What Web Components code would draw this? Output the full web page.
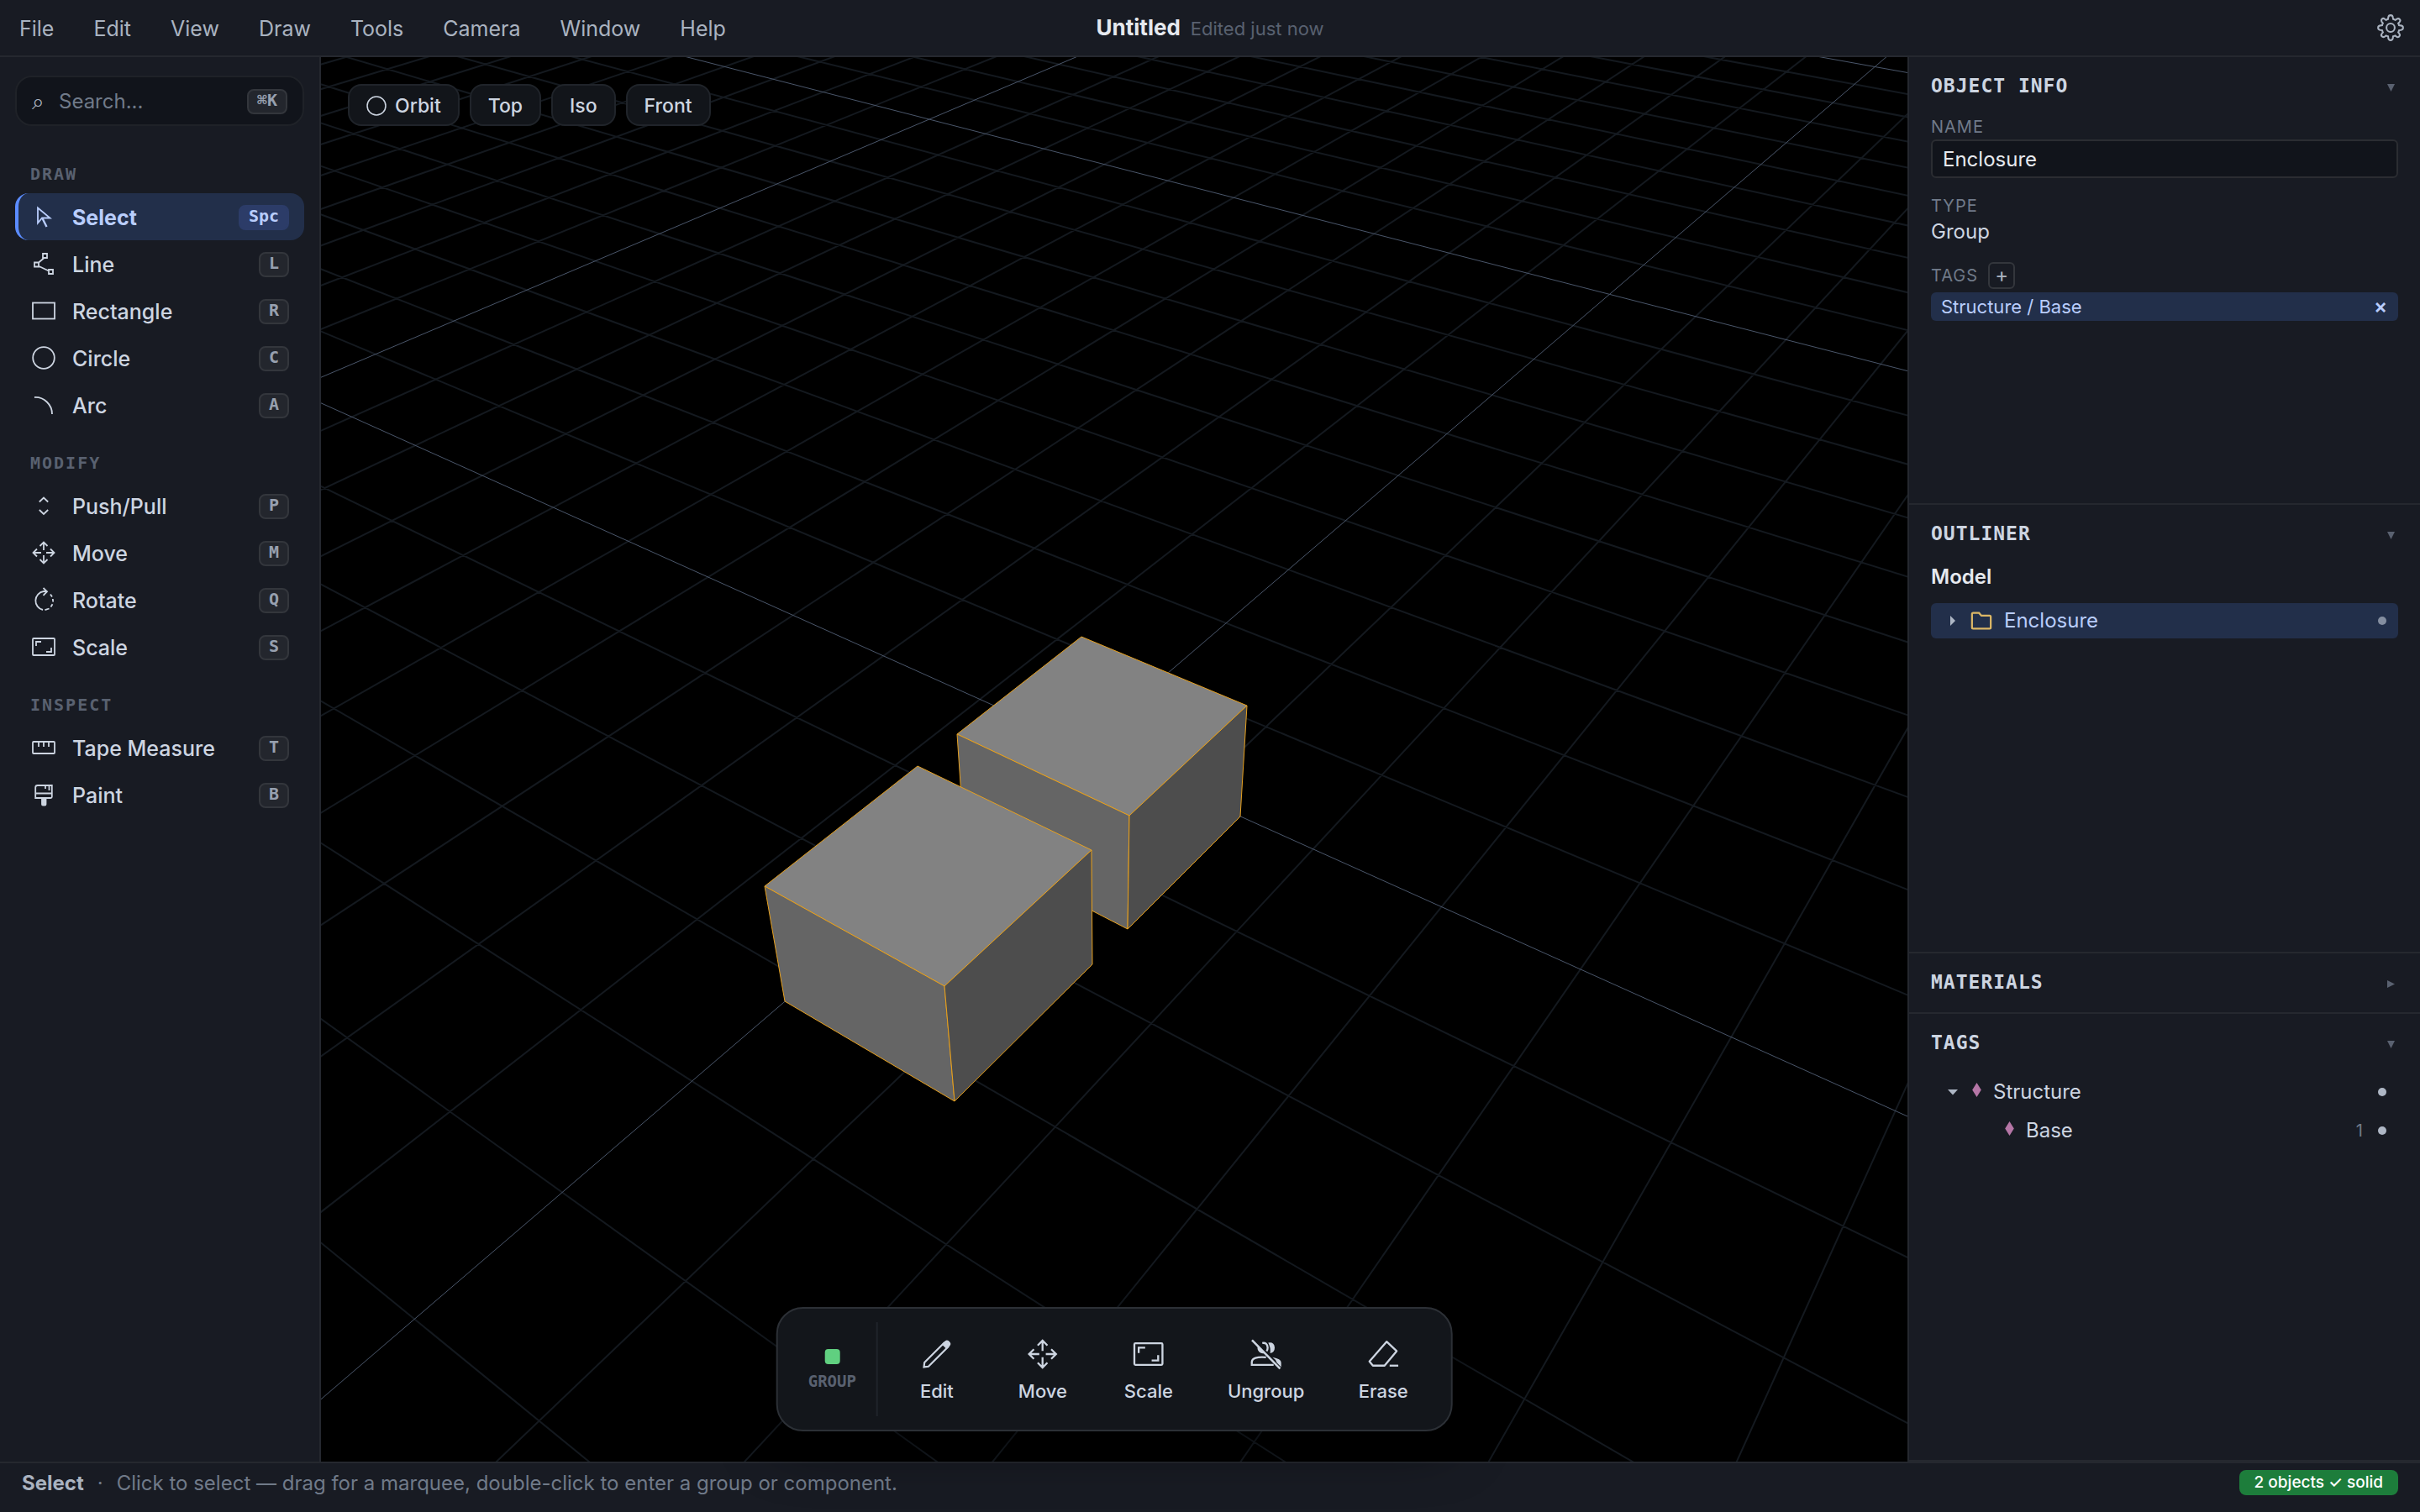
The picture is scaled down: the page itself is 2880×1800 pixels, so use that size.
<!DOCTYPE html>
<html lang="en">
<head>
<meta charset="utf-8">
<title>Untitled</title>
<style>
  :root {
    --panel: #181b23; --line: #25282f; --well: #11141b; --text: #cdd5e1; --strong: #e6e9ee;
    --muted: #aab3c0; --dim: #707a89; --faint: #596170; --accent: #5b8cff; --sel: #222f4a; --sel-text: #b9cdfc;
    --mono: "DejaVu Sans Mono", "Liberation Mono", monospace;
  }
  body { margin: 0; height: 100vh; background: var(--panel); color: var(--text); font: 24px/30px Inter, "Liberation Sans", sans-serif; overflow: hidden; }
</style>
</head>
<body>
<cad-app></cad-app>
<script>
const BASE = `*{box-sizing:border-box}button{font:inherit;color:inherit;background:none;border:0;padding:0;margin:0;cursor:pointer}`;
function define(name, render, after) {
  customElements.define(name, class extends HTMLElement {
    connectedCallback() {
      if (this.shadowRoot) return;
      const root = this.attachShadow({ mode: 'open' });
      const t = document.createElement('template');
      t.innerHTML = render(this);
      root.append(t.content.cloneNode(true));
      if (after) after(root, this);
    }
  });
}

const ICONS = {
  select: '<path d="M7 3.5V21.5L12 15.5H21.5Z"/><path d="M12.500 16L17.500 26" stroke-width="2.400"/>',
  line: '<path d="M13 2h5v5h-5zM3 12.500h5v5H3zM20 21h5v5h-5zM14 7.500L8 12.500M8.500 17L20 22.500"/>',
  rect: '<rect x="1" y="4.500" width="26" height="19"/>',
  circle: '<circle cx="14" cy="14" r="12.800"/>',
  arc: '<path d="M3 5A20 20 0 0 1 24 25"/>',
  push: '<path d="M8.800 9.500L14 4.500L19.200 9.500M8.800 19L14 24L19.200 19"/>',
  move: '<path d="M14 11V2M9.500 6L14 1.500L18.500 6M14 17V26M9.500 22L14 26.500L18.500 22M11 14H2M6 9.500L1.500 14L6 18.500M17 14H26M22 9.500L26.500 14L22 18.500"/>',
  rotate: '<path d="M13 26A11.200 11.200 0 0 1 14 4H18M13.500 0L18 4.200L13.500 8.800"/><path d="M15.500 26.200L20.500 24.500M22.500 22.500L24.500 19.300M25.200 16.500L24.800 13M24 10.500L22 7.500"/>',
  scale: '<rect x="1" y="4" width="26" height="20" rx="1"/><path d="M5 13V8H11M23 15V20H17"/>',
  tape: '<rect x="1" y="7" width="26" height="14" rx="1"/><path d="M8 7.500V13M14 7.500V13M20 7.500V13"/>',
  paint: '<path d="M4.200 18V5.500A2.500 2.500 0 0 1 6.700 3H23.800V16.500A1.500 1.500 0 0 1 22.300 18ZM4 12.500H24M16 3V7M20.500 3V9"/><path d="M12 18.500H16.500V25.500A1 1 0 0 1 15.500 26.500H13A1 1 0 0 1 12 25.500Z" fill="currentColor"/>',
  edit: '<path d="M2.200 26L2.700 21.800L20.800 3.700L24.500 7.400L6.400 25.500Z" stroke-width="1.700"/><path d="M19.500 5L22.300 2.200Q23.500 1 24.800 2.200L26 3.400Q27 4.600 26 5.800L23.200 8.600Z" fill="currentColor" stroke-width="1"/>',
  ungroup: '<path d="M1 1L27 27.500" stroke-width="2"/><path d="M6.500 6.500A5 5 0 0 0 13 13Z" fill="currentColor" stroke="none"/><path d="M10.500 3.800Q15 3 15.500 8Q15.500 10 14.500 11.200"/><path d="M16 3.500Q21.500 2.500 22 8Q22 12.500 17.800 13.300Q18.500 8 16 3.500Z" fill="currentColor" stroke="none"/><path d="M14 17Q1 16 .8 21.500V24H21"/><path d="M20 17Q28 18.500 28 22V26L24 22Q23 19 20 17Z" fill="currentColor" stroke="none"/>',
  erase: '<path d="M16.700 2.500L26 11.200L14.800 24.700H4L.8 20.800Z" stroke-linejoin="round"/><path d="M19.500 24.700H27.500"/>',
  folder: '<path d="M2 23V5.500Q2 4 3.500 4H11L14 7.500H24.500Q26 7.500 26 9V22.500Q26 24 24.500 24H3.500Q2 24 2 22.500Z" stroke-width="2.400"/>',
  gear: '<path d="M11.600 3.200Q11.900 1 14 1T16.400 3.200L16.700 5Q18 5.400 19 6L20.500 4.900Q22.200 3.900 23.500 5.200T23.100 8.300L22 9.400Q22.500 10.400 22.800 11.500L24.800 11.700Q27 12 27 14T24.800 16.400L22.800 16.700Q22.500 18 22 18.800L23.100 20.300Q24.300 21.900 22.900 23.200T20 23.200L18.800 22.200Q17.800 22.700 16.600 23L16.400 24.800Q16 27 14 27T11.600 24.800L11.400 23Q10.200 22.700 9.200 22.200L7.900 23.200Q6.200 24.300 4.900 23T4.900 20.200L6 18.800Q5.500 17.800 5.200 16.700L3.200 16.400Q1 16 1 14T3.200 11.700L5.200 11.500Q5.500 10.300 6 9.300L4.900 7.900Q3.800 6.200 5.100 4.900T8 5L9.200 6Q10.200 5.400 11.300 5.100Z"/><circle cx="14" cy="14" r="4.300"/>'
};
define('cad-icon', el => `<style>:host{display:block;flex:none;width:var(--icon,28px);height:var(--icon,28px)}svg{display:block;width:100%;height:100%;overflow:visible}</style>
<svg viewBox="0 0 28 28" fill="none" stroke="currentColor" stroke-width="1.800" aria-hidden="true">${ICONS[el.getAttribute('name')]}</svg>`);

define('key-cap', () => `<style>${BASE}:host{display:block;flex:none}
kbd{display:block;height:30px;padding:0 10px;border:2px solid var(--cap-line,#33363c);border-radius:8px;background:var(--cap-bg,#23262d);color:var(--cap-text,#97a0af);font:bold 20px/22px var(--mono)}</style><kbd><slot></slot></kbd>`);

define('menu-bar', () => `<style>${BASE}
:host{display:block;border-bottom:2px solid var(--line);height:68px}
header{display:grid;grid-template-columns:1fr auto 1fr;align-items:center;height:66px}
nav{display:flex;gap:1px}nav button{padding:1px 23px 0;color:var(--muted);font-size:25px}
h1{margin:0;padding-top:1px;display:flex;align-items:baseline;gap:12px;font-size:26px;font-weight:700;color:var(--strong)}
small{font-size:22px;font-weight:400;color:var(--faint)}
.end{justify-self:end;margin-right:19px;color:var(--muted);--icon:32px}</style>
<header><nav>${['File','Edit','View','Draw','Tools','Camera','Window','Help'].map(t=>`<button>${t}</button>`).join('')}</nav>
<h1>Untitled <small>Edited just now</small></h1><button class="end" aria-label="Settings"><cad-icon name="gear"></cad-icon></button></header>`);

define('tool-item', el => `<style>${BASE}:host{display:block}
button{width:100%;height:56px;display:flex;align-items:center;gap:20px;padding:2px 18px 0 16px;border-left:4px solid transparent;border-radius:16px;font-size:25px;font-weight:500;text-align:left}
cad-icon{margin-bottom:2px}
span{flex:1}
:host([active]) button{background:var(--sel);border-color:var(--accent);color:var(--sel-text);font-weight:700;--cap-bg:#2c3c68;--cap-line:#2c3c68;--cap-text:#b9cdfc}</style>
<button><cad-icon name="${el.getAttribute('icon')}"></cad-icon><span><slot></slot></span><key-cap>${el.getAttribute('key')}</key-cap></button>`);

define('tool-group', el => `<style>${BASE}:host{display:block}h2{margin:0;padding:29px 18px 11px;font:bold 20px/24px var(--mono);letter-spacing:2px;color:var(--faint)}</style><h2>${el.getAttribute('label')}</h2><slot></slot>`);

define('tool-sidebar', () => `<style>${BASE}
:host{display:block;width:382px;padding:22px 18px;border-right:2px solid var(--line);background:var(--panel)}
.search{display:flex;align-items:center;height:60px;padding:2px 18px 0;gap:16px;border:2px solid #1f2228;border-radius:20px;background:var(--well);margin-bottom:16px;color:var(--dim)}
.search i{width:16px;font:normal 26px/30px "DejaVu Sans",sans-serif;color:var(--muted)}
input{flex:1;min-width:0;border:0;padding:0;background:none;outline:0;font:24px/30px Inter,sans-serif;color:var(--text)}
input::placeholder{color:var(--dim);opacity:1}</style>
<label class="search"><i aria-hidden="true">⌕</i><input placeholder="Search..." aria-label="Search tools"><key-cap>⌘K</key-cap></label>
<tool-group label="DRAW"><tool-item active icon="select" key="Spc">Select</tool-item><tool-item icon="line" key="L">Line</tool-item><tool-item icon="rect" key="R">Rectangle</tool-item><tool-item icon="circle" key="C">Circle</tool-item><tool-item icon="arc" key="A">Arc</tool-item></tool-group>
<tool-group label="MODIFY"><tool-item icon="push" key="P">Push/Pull</tool-item><tool-item icon="move" key="M">Move</tool-item><tool-item icon="rotate" key="Q">Rotate</tool-item><tool-item icon="scale" key="S">Scale</tool-item></tool-group>
<tool-group label="INSPECT"><tool-item icon="tape" key="T">Tape Measure</tool-item><tool-item icon="paint" key="B">Paint</tool-item></tool-group>`);

define('action-button', el => `<style>${BASE}:host{display:block}
button{min-width:112px;height:112px;padding:4px 24px 0;display:flex;flex-direction:column;align-items:center;justify-content:center;gap:12px;font-size:22px;font-weight:500;line-height:28px;--icon:36px}</style>
<button><cad-icon name="${el.getAttribute('icon')}"></cad-icon><slot></slot></button>`);

define('action-bar', () => `<style>${BASE}
:host{display:flex;gap:14px;padding:16px 24px;border:2px solid #2c3036;border-radius:32px;background:#13161b;box-shadow:0 16px 64px rgba(0,0,0,.5)}
.kind{display:flex;flex-direction:column;align-items:center;justify-content:center;gap:8px;padding:2px 24px 0 12px;border-right:2px solid #20242a;font:bold 19px/24px var(--mono);color:var(--faint)}
.kind i{width:18px;height:18px;border-radius:4px;background:#60d080}</style>
<div class="kind"><i></i>GROUP</div>
<action-button icon="edit">Edit</action-button><action-button icon="move">Move</action-button><action-button icon="scale">Scale</action-button><action-button icon="ungroup">Ungroup</action-button><action-button icon="erase">Erase</action-button>`);

define('view-port', () => `<style>${BASE}
:host{display:block;position:relative;z-index:1;background:#000;min-width:0}
svg.scene{position:absolute;inset:0;width:100%;height:100%}
.views{position:absolute;left:32px;top:32px;display:flex;gap:12px}
.views button{display:flex;align-items:center;gap:10px;height:50px;padding:1px 20px 0;border:2px solid #20242a;border-radius:16px;background:#12151a;font-size:23px;font-weight:500;--icon:24px}
action-bar{position:absolute;bottom:36px;left:50%;transform:translateX(-50%)}</style>
<svg class="scene" viewBox="382 68 1888 1672" preserveAspectRatio="xMidYMid slice" role="img" aria-label="Model view">
<g class="minor" stroke="#14191f" stroke-width="2"></g><g class="major" stroke="#4a566a" stroke-width="1"></g>
<g stroke="#e8a11e" stroke-width="1" stroke-linejoin="round">
<path fill="#828282" d="M1287 758L1484 840L1344 971L1139 874Z"/><path fill="#656565" d="M1139 874L1344 971L1342 1106L1148 1006Z"/><path fill="#4d4d4d" d="M1344 971L1484 840L1476 972L1342 1106Z"/>
<path fill="#828282" d="M1092 912L1299 1012L1124 1174L910 1055Z"/><path fill="#656565" d="M910 1055L1124 1174L1136 1311L934 1192Z"/><path fill="#4d4d4d" d="M1124 1174L1299 1012L1300 1148L1136 1311Z"/></g></svg>
<div class="views"><button><cad-icon name="circle"></cad-icon>Orbit</button><button>Top</button><button>Iso</button><button>Front</button></div>
<action-bar></action-bar>`, root => {
  // Ground plane: perspective projection of the unit grid, every tenth line is a major one.
  const G = -0.03505, C = 0.0492, NEAR = 0.03, FAR = 70;
  const project = (x, y) => { const w = 1 + G * x + C * y; return [(1289 + 82.04 * x + 156.89 * y) / w, (887.8 + 26.1 * x - 36.5 * y) / w]; };
  const groups = { minor: [], major: [] };
  const add = (i, a, b) => groups[i % 10 ? 'minor' : 'major'].push(`M${project(...a).map(n => n.toFixed(1))}L${project(...b).map(n => n.toFixed(1))}`);
  for (let i = -40; i <= FAR; i++) {
    const xMax = (1 + C * i - NEAR) / -G;
    if (xMax > -FAR) add(i, [-FAR, i], [Math.min(xMax, FAR), i]);
  }
  for (let i = -FAR; i <= 40; i++) {
    const yMin = (NEAR - 1 - G * i) / C;
    if (yMin < FAR) add(i, [i, yMin], [i, FAR]);
  }
  for (const k in groups) root.querySelector('.' + k).innerHTML = `<path d="${groups[k].join('')}"/>`;
});

define('panel-section', el => `<style>${BASE}
:host{display:block;flex:1;border-bottom:2px solid var(--line);min-height:0}:host([collapsed]){flex:none}
h2{margin:0;padding:0 0 2px}
h2 button{width:100%;display:flex;justify-content:space-between;align-items:center;padding:20px 26px;font:bold 23px/28px var(--mono);letter-spacing:1px;text-align:left}
svg{width:18px;height:18px;fill:var(--faint)}
div{padding:0 26px}</style>
<h2><button aria-expanded="${!el.hasAttribute('collapsed')}">${el.getAttribute('label')}<svg viewBox="0 0 18 18"><path d="${el.hasAttribute('collapsed')?'M5 7V16L14 11.500Z':'M5 7H14L9.500 16Z'}"/></svg></button></h2>${el.hasAttribute('collapsed')?'':'<div><slot></slot></div>'}`);

define('object-form', () => `<style>${BASE}
:host{display:flex;flex-direction:column;gap:20px}
.field{display:flex;flex-direction:column;gap:2px}
.label{font-size:20px;line-height:26px;letter-spacing:1px;color:var(--dim)}
.value{line-height:32px}
input{width:100%;height:46px;padding:0 12px;border:2px solid #2b2d32;border-radius:6px;background:var(--well);color:var(--strong);font:24px/30px Inter,sans-serif;outline:0}
.head{display:flex;align-items:center;gap:12px}
.add{width:32px;height:32px;border:2px solid #33363c;border-radius:6px;color:var(--muted);font-size:24px;line-height:26px}
.tag{display:flex;justify-content:space-between;align-items:center;height:34px;margin-top:2px;padding:0 11px 0 12px;border-radius:6px;background:var(--sel);color:var(--sel-text);font-size:22px}
.tag button{width:20px;font-size:24px;font-weight:600}</style>
<div class="field"><label class="label" for="name">NAME</label><input id="name" value="Enclosure"></div>
<div class="field"><span class="label">TYPE</span><span class="value">Group</span></div>
<div class="field"><div class="head"><span class="label">TAGS</span><button class="add" aria-label="Add tag">+</button></div><div class="tag">Structure / Base<button aria-label="Remove tag">×</button></div></div>`);

define('tree-row', el => {
  const arrow = { right: 'M5 2V14L11 8Z', down: 'M2 5H14L8 11.500Z' }[el.getAttribute('arrow')];
  return `<style>${BASE}:host{display:flex;align-items:center;height:42px;padding:0 14px 0 18px;border-radius:6px}
:host([nested]){padding-left:58px}:host([selected]){background:var(--sel);color:var(--sel-text)}
.arrow{width:16px;height:16px;fill:#aeb7c5;margin-right:15px}
.gem{width:11px;height:17px;fill:#b576a6;margin:0 14px 4px 0}:host([nested]) .gem{margin-left:30px}
.folder{--icon:26px;color:#dcb766;margin:0 14px 0 -2px}
.name{flex:1}.count{font-size:20px;color:var(--dim);margin-right:18px}
.dot{width:10px;height:10px;border-radius:5px;background:#aeb7c5}:host([selected]) .dot{opacity:.7}</style>
${arrow ? `<svg class="arrow" viewBox="0 0 16 16"><path d="${arrow}"/></svg>` : ''}
${el.hasAttribute('folder') ? '<cad-icon class="folder" name="folder"></cad-icon>' : '<svg class="gem" viewBox="0 0 10 16"><path d="M5 0L10 8L5 16L0 8Z"/></svg>'}
<span class="name"><slot></slot></span>${el.hasAttribute('count') ? `<span class="count">${el.getAttribute('count')}</span>` : ''}<button class="dot" aria-label="Toggle visibility"></button>`;
});

define('side-panel', () => `<style>${BASE}
:host{display:flex;flex-direction:column;width:610px;border-left:2px solid var(--line);background:var(--panel)}
.root{display:block;line-height:32px;font-weight:600;color:var(--strong);margin-bottom:15px}
.tree{display:flex;flex-direction:column;gap:4px;padding-top:2px}</style>
<panel-section label="OBJECT INFO"><object-form></object-form></panel-section>
<panel-section label="OUTLINER"><span class="root">Model</span><tree-row selected folder arrow="right">Enclosure</tree-row></panel-section>
<panel-section label="MATERIALS" collapsed></panel-section>
<panel-section label="TAGS"><div class="tree"><tree-row arrow="down">Structure</tree-row><tree-row nested count="1">Base</tree-row></div></panel-section>`);

define('status-bar', () => `<style>${BASE}
:host{display:flex;justify-content:space-between;align-items:flex-start;height:60px;padding:8px 26px 0;border-top:2px solid var(--line);color:var(--dim)}
p{margin:0;display:flex;gap:16px;line-height:32px}b{font-weight:700;color:var(--muted)}
output{height:30px;padding:0 18px;border-radius:8px;background:#1d7d3b;color:#fff;font-size:19px;font-weight:500}</style>
<p><b>Select</b><span>·</span><span>Click to select — drag for a marquee, double-click to enter a group or component.</span></p><output>2 objects ✓ solid</output>`);

define('cad-app', () => `<style>${BASE}:host{display:grid;grid-template-rows:auto 1fr auto;height:100vh}main{display:grid;grid-template-columns:auto 1fr auto;min-height:0}</style>
<menu-bar></menu-bar><main><tool-sidebar></tool-sidebar><view-port></view-port><side-panel></side-panel></main><status-bar></status-bar>`);
</script>
</body>
</html>
